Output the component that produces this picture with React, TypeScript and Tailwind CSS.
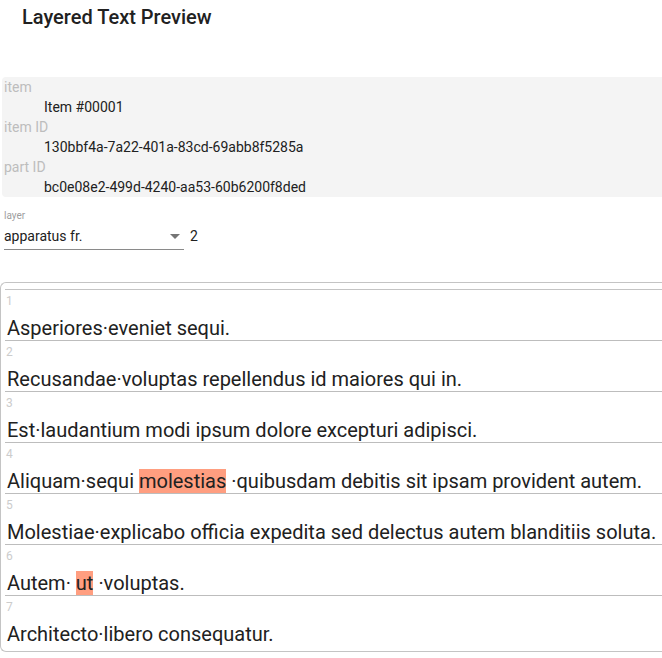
import React from "react";

type Seg = { t: string; hl?: boolean };

const rows: Seg[][] = [
  [{ t: "Asperiores·eveniet sequi." }],
  [{ t: "Recusandae·voluptas repellendus id maiores qui in." }],
  [{ t: "Est·laudantium modi ipsum dolore excepturi adipisci." }],
  [
    { t: "Aliquam·sequi " },
    { t: "molestias", hl: true },
    { t: " ·quibusdam debitis sit ipsam provident autem." },
  ],
  [{ t: "Molestiae·explicabo officia expedita sed delectus autem blanditiis soluta." }],
  [{ t: "Autem· " }, { t: "ut", hl: true }, { t: " ·voluptas." }],
  [{ t: "Architecto·libero consequatur." }],
];

const meta = [
  { label: "item", value: "Item #00001" },
  { label: "item ID", value: "130bbf4a-7a22-401a-83cd-69abb8f5285a" },
  { label: "part ID", value: "bc0e08e2-499d-4240-aa53-60b6200f8ded" },
];

export default function App() {
  return (
    <div className="w-[662px] h-[658px] overflow-hidden bg-white font-['Roboto',sans-serif] text-[#212121]">
      {/* Header */}
      <h2 className="px-[22px] pt-[5px] text-[20px] leading-[24px] font-medium">Layered Text Preview</h2>

      {/* Item info */}
      <div className="mt-[48px] ml-[2px] rounded-l-[4px] bg-[#f4f4f4] text-[14px] leading-[20px]">
        {meta.map((m) => (
          <div key={m.label}>
            <div className="pl-[2px] text-[#bdbdbd]">{m.label}</div>
            <div className="pl-[42px]">{m.value}</div>
          </div>
        ))}
      </div>

      {/* Layer picker */}
      <div className="mt-[13px] pl-[4px]">
        <div className="text-[10px] leading-[12px] text-[#9e9e9e]">layer</div>
        <div className="mt-[4px] flex items-start">
          <div className="w-[180px] flex items-center justify-between border-b border-[#8a8a8a] pb-[3px] text-[14px] leading-[20px]">
            <span>apparatus fr.</span>
            <span className="mr-[4px] w-0 h-0 border-l-[5px] border-r-[5px] border-t-[5px] border-l-transparent border-r-transparent border-t-[#757575]" />
          </div>
          <span className="ml-[6px] text-[14px] leading-[20px]">2</span>
        </div>
      </div>

      {/* Text rows */}
      <div className="mt-[32px] rounded-l-[6px] border-l border-t border-b border-[#c4c4c4] pl-[4px] pb-[5px]">
        <div className="h-[7px] border-b border-[#c4c4c4]" />
        {rows.map((segs, i) => (
          <div key={i} className={i < rows.length - 1 ? "border-b border-[#bdbdbd]" : ""}>
            <div className="h-[26px] pl-[1px] pt-[4px] text-[12px] leading-[14px] text-[#cccccc]">{i + 1}</div>
            <div className="pl-[2px] text-[20px] leading-[24px] whitespace-nowrap">
              {segs.map((s, j) =>
                s.hl ? (
                  <span key={j} className="bg-[#ff9e80]">
                    {s.t}
                  </span>
                ) : (
                  <span key={j}>{s.t}</span>
                )
              )}
            </div>
          </div>
        ))}
      </div>
    </div>
  );
}
